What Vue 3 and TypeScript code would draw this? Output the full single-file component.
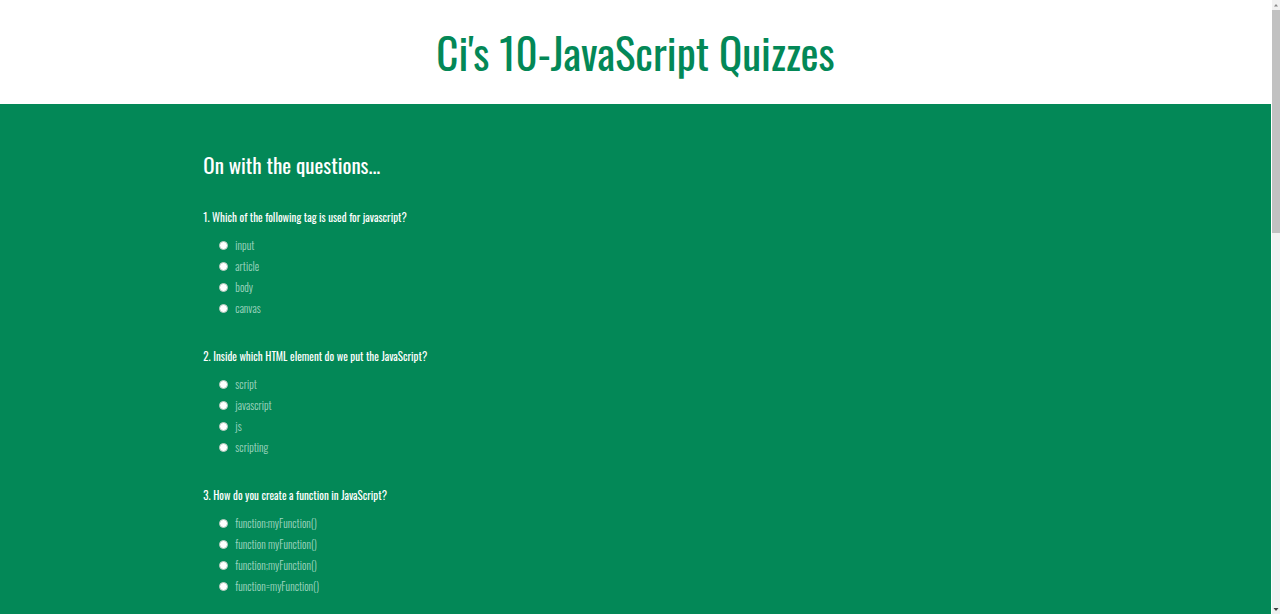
<script setup lang="ts">
import { reactive } from 'vue'

interface Question {
  text: string
  options: string[]
}

const questions: Question[] = [
  {
    text: 'Which of the following tag is used for javascript?',
    options: ['input', 'article', 'body', 'canvas'],
  },
  {
    text: 'Inside which HTML element do we put the JavaScript?',
    options: ['script', 'javascript', 'js', 'scripting'],
  },
  {
    text: 'How do you create a function in JavaScript?',
    options: [
      'function:myFunction()',
      'function myFunction()',
      'function;myFunction()',
      'function=myFunction()',
    ],
  },
]

const answers = reactive<Record<number, string>>({})
</script>

<template>
  <div class="window">
    <div class="page">
      <header class="banner">
        <h1>Ci's 10-JavaScript Quizzes</h1>
      </header>
      <main class="quiz">
        <form class="inner">
          <h2>On with the questions...</h2>
          <fieldset v-for="(question, q) in questions" :key="q">
            <legend>{{ q + 1 }}. {{ question.text }}</legend>
            <div class="options">
              <label v-for="option in question.options" :key="option">
                <input v-model="answers[q]" type="radio" :name="`question-${q}`" :value="option" />
                <span>{{ option }}</span>
              </label>
            </div>
          </fieldset>
        </form>
      </main>
    </div>
    <div class="scrollbar" aria-hidden="true">
      <svg viewBox="0 0 8 10"><path d="M2 6.5 4 4l2 2.5z" fill="#888" /></svg>
      <div class="track"><div class="thumb"></div></div>
      <svg viewBox="0 0 8 10"><path d="M1.5 4h5L4 7z" fill="#444" /></svg>
    </div>
  </div>
</template>

<style>
body {
  margin: 0;
}
</style>

<style scoped>
.window {
  display: flex;
  height: 100vh;
  overflow: hidden;
  background: #fff;
  font-family: Oswald, 'Liberation Sans Narrow', 'Liberation Sans', sans-serif;
}

.page {
  display: flex;
  flex: 1;
  flex-direction: column;
  min-width: 0;
}

.banner {
  padding: 20px 0;
  text-align: center;
}

h1 {
  margin: 0;
  color: #038857;
  font-size: 43px;
  font-weight: 400;
  line-height: 64px;
}

.quiz {
  flex: 1;
  padding: 44px 16% 0;
  background: #038857;
}

h2 {
  margin: 0 0 29px;
  color: #fff;
  font-size: 21px;
  font-weight: 400;
  line-height: 34px;
}

fieldset {
  min-width: 0;
  margin: 0 0 28px;
  padding: 0;
  border: 0;
}

legend {
  padding: 0;
  color: #fff;
  font-size: 11px;
  font-weight: 400;
  line-height: 12px;
}

.options {
  padding: 12px 0 3px 16px;
}

label {
  display: flex;
  align-items: center;
  gap: 7px;
  width: fit-content;
  color: #a0d6c0;
  font-size: 11px;
  font-weight: 300;
  line-height: 21px;
}

input {
  appearance: none;
  width: 9px;
  height: 9px;
  margin: 0;
  border: 1px solid #b4c9bd;
  border-radius: 50%;
  background: #fff;
}

input:checked {
  border: 3px solid #fff;
  background: #038857;
}

.scrollbar {
  display: flex;
  flex: 0 0 8px;
  flex-direction: column;
  border-left: 1px solid #fff;
  background: #f1f1f1;
}

.scrollbar svg {
  flex: none;
  width: 8px;
  height: 10px;
}

.track {
  flex: 1;
}

.thumb {
  height: 37.5%;
  background: #c1c1c1;
}
</style>
